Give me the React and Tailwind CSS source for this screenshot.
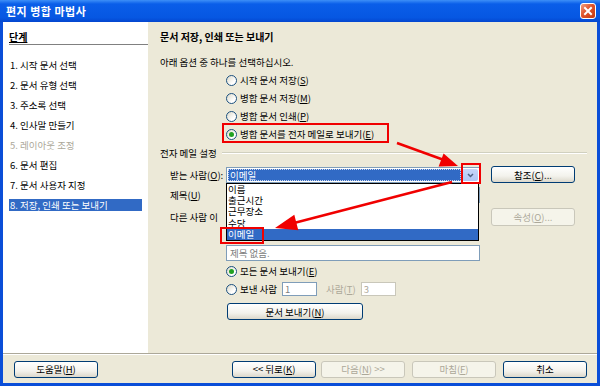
import React from 'react';

const steps = [
  { label: '1. 시작 문서 선택' },
  { label: '2. 문서 유형 선택' },
  { label: '3. 주소록 선택' },
  { label: '4. 인사말 만들기' },
  { label: '5. 레이아웃 조정', disabled: true },
  { label: '6. 문서 편집' },
  { label: '7. 문서 사용자 지정' },
  { label: '8. 저장, 인쇄 또는 보내기', active: true },
];

const Radio = ({ checked }) => (
  <span className="relative w-[11px] h-[11px] rounded-full border border-[#1C5180] bg-[linear-gradient(135deg,#dcd9c8,#ffffff_70%)] flex items-center justify-center shrink-0">
    {checked && <span className="w-[5px] h-[5px] rounded-full bg-[#21A121]" />}
  </span>
);

const RadioRow = ({ checked, children }) => (
  <div className="h-[18px] flex items-center gap-[3px]">
    <Radio checked={checked} />
    <span>{children}</span>
  </div>
);

const Button = ({ children, disabled, className = '' }) => (
  <div
    className={
      'flex items-center justify-center rounded-[3px] border ' +
      (disabled
        ? 'border-[#C9C7BA] bg-[#F5F4EA] text-[#ACA899] '
        : 'border-[#003C74] bg-[linear-gradient(to_bottom,#ffffff,#f3f2ec_60%,#dcd8cb)] text-black ') +
      className
    }
  >
    {children}
  </div>
);

export default function App() {
  return (
    <div className="relative w-[600px] h-[386px] flex flex-col bg-[#0A4ED8] font-['Noto_Sans_CJK_KR',sans-serif] text-[9.5px] leading-[12px] text-black overflow-hidden">
      {/* title bar */}
      <div className="h-[22px] flex items-center pl-[6px] pr-[4px] bg-[linear-gradient(to_bottom,#3d8ff7_0%,#0a5ee9_18%,#0657e2_80%,#0446cf_100%)]">
        <span className="text-white font-bold text-[11px] tracking-[0.5px]">편지 병합 마법사</span>
        <div className="ml-auto w-[16px] h-[16px] rounded-[3px] border border-white bg-[linear-gradient(135deg,#f0a080,#e0542c_45%,#c43a12)] flex items-center justify-center">
          <svg width="10" height="10" viewBox="0 0 10 10">
            <path d="M2 2 L8 8 M8 2 L2 8" stroke="white" strokeWidth="2" strokeLinecap="square" />
          </svg>
        </div>
      </div>

      {/* client area */}
      <div className="flex-1 mx-[3px] mb-[3px] bg-[#ECE9D8] flex flex-col">
        <div className="h-[331px] flex">
          {/* steps */}
          <div className="w-[145px] bg-white flex flex-col">
            <div className="mt-[9px] ml-[6px] h-[12px] font-bold text-[10px] underline">단계</div>
            <div className="ml-[6px] mt-[1px] h-px bg-[#808080]" />
            <div className="mt-[10px] flex flex-col">
              {steps.map((s) => (
                <div key={s.label} className="h-[20px] flex items-center px-[6px]">
                  <span
                    className={
                      'w-full h-[12px] pl-[1px] ' +
                      (s.active ? 'bg-[#316AC5] text-white' : s.disabled ? 'text-[#ACA899]' : '')
                    }
                  >
                    {s.label}
                  </span>
                </div>
              ))}
            </div>
          </div>

          {/* page */}
          <div className="flex-1 flex flex-col">
            <div className="mt-[9px] pl-[12px] h-[12px] font-bold text-[10px]">문서 저장, 인쇄 또는 보내기</div>
            <div className="mt-[13px] pl-[12px] h-[12px]">아래 옵션 중 하나를 선택하십시오.</div>
            <div className="mt-[3px] pl-[78px] flex flex-col">
              <RadioRow>시작 문서 저장(<u>S</u>)</RadioRow>
              <RadioRow>병합 문서 저장(<u>M</u>)</RadioRow>
              <RadioRow>병합 문서 인쇄(<u>P</u>)</RadioRow>
              <RadioRow checked>병합 문서를 전자 메일로 보내기(<u>E</u>)</RadioRow>
            </div>

            <div className="mt-[4px] pl-[12px] pr-[10px] h-[12px] flex items-center">
              <span>전자 메일 설정</span>
              <div className="flex-1 ml-[5px] flex flex-col">
                <div className="h-px bg-[#D0D0BF]" />
                <div className="h-px bg-white" />
              </div>
            </div>

            {/* to */}
            <div className="mt-[8px] pl-[22px] h-[16px] flex items-center">
              <span className="w-[56px] whitespace-nowrap">받는 사람(<u>O</u>):</span>
              <div className="relative z-10 w-[254px] h-[16px] border border-[#7F9DB9] bg-white flex items-center p-[1px]">
                <div className="flex-1 h-full bg-[#316AC5] text-white border border-dotted border-[#c9d6ee] flex items-center pl-[1px]">
                  이메일
                </div>
                <div className="w-[16px] h-full ml-[1px] rounded-[2px] bg-[linear-gradient(to_bottom,#c6d6fb,#b0c6f6)] flex items-center justify-center">
                  <svg width="7" height="5" viewBox="0 0 7 5">
                    <path d="M1 1 L3.5 3.5 L6 1" stroke="#4D6185" strokeWidth="1.5" fill="none" />
                  </svg>
                </div>
                <div className="absolute left-[-1px] top-[15px] w-[253px] h-[58px] border border-black bg-white flex flex-col leading-[11px]">
                  <div className="h-[11.5px] pl-[1px]">이름</div>
                  <div className="h-[11.5px] pl-[1px]">출근시간</div>
                  <div className="h-[11.5px] pl-[1px]">근무장소</div>
                  <div className="h-[11.5px] pl-[1px]">수당</div>
                  <div className="h-[11.5px] pl-[1px] bg-[#316AC5] text-white">이메일</div>
                </div>
              </div>
              <Button className="ml-[11px] w-[84px] h-[17px] -mt-[1px]">
                참조(<u>C</u>)...
              </Button>
            </div>

            {/* subject */}
            <div className="mt-[4px] pl-[22px] h-[16px] flex items-center">
              <span className="w-[56px]">제목(<u>U</u>)</span>
              <div className="w-[254px] h-[16px] border border-[#7F9DB9] bg-white" />
            </div>

            {/* cc */}
            <div className="mt-[5px] pl-[22px] h-[18px] flex items-center">
              <span className="w-[56px] whitespace-nowrap">다른 사람 이</span>
              <div className="w-[254px]" />
              <Button disabled className="ml-[11px] w-[84px] h-[18px]">
                속성(<u>O</u>)...
              </Button>
            </div>

            <div className="mt-[19px] ml-[78px] w-[254px] h-[16px] border border-[#7F9DB9] bg-white flex items-center pl-[3px] text-[#808080]">
              제목 없음.
            </div>

            <div className="mt-[1px] pl-[78px] flex flex-col">
              <RadioRow checked>모든 문서 보내기(<u>E</u>)</RadioRow>
              <div className="h-[18px] flex items-center">
                <Radio />
                <span className="ml-[3px]">보낸 사람</span>
                <div className="ml-[5px] w-[35px] h-[14px] border border-[#7F9DB9] bg-white pl-[2px] flex items-center text-[#808080]">1</div>
                <span className="ml-[9px] text-[#ACA899]">사람(<u>T</u>)</span>
                <div className="ml-[5px] w-[35px] h-[14px] border border-[#C9C7BA] bg-white pl-[2px] flex items-center text-[#ACA899]">3</div>
              </div>
            </div>

            <Button className="mt-[5px] ml-[79px] w-[136px] h-[17px]">
              문서 보내기(<u>N</u>)
            </Button>
          </div>
        </div>

        {/* separator */}
        <div className="h-px bg-[#ACA899]" />
        <div className="h-px bg-white" />

        {/* buttons */}
        <div className="flex-1 flex items-center pl-[11px] pr-[10px]">
          <Button className="w-[84px] h-[17px]">
            도움말(<u>H</u>)
          </Button>
          <Button className="ml-auto w-[84px] h-[17px]">
            &lt;&lt; 뒤로(<u>K</u>)
          </Button>
          <Button disabled className="ml-[5px] w-[84px] h-[17px]">
            다음(<u>N</u>) &gt;&gt;
          </Button>
          <Button disabled className="ml-[7px] w-[84px] h-[17px]">
            마침(<u>F</u>)
          </Button>
          <Button className="ml-[7px] w-[84px] h-[17px]">취소</Button>
        </div>
      </div>

      {/* annotations */}
      <svg className="absolute inset-0 pointer-events-none z-20" width="600" height="386" viewBox="0 0 600 386">
        <g fill="none" stroke="#F00000" strokeWidth="2">
          <rect x="223" y="124" width="165" height="18" />
          <rect x="462" y="164" width="18" height="19" />
          <rect x="221" y="228" width="42" height="15" />
        </g>
        <line x1="397" y1="143" x2="444" y2="160" stroke="#F00000" strokeWidth="2.5" />
        <polygon points="458,166 438.6,166.4 443.6,153.4" fill="#F00000" />
        <line x1="452" y1="182" x2="294" y2="223" stroke="#F00000" strokeWidth="2.5" />
        <polygon points="275,228 294.3,214.8 298.3,230.2" fill="#F00000" />
      </svg>
    </div>
  );
}
